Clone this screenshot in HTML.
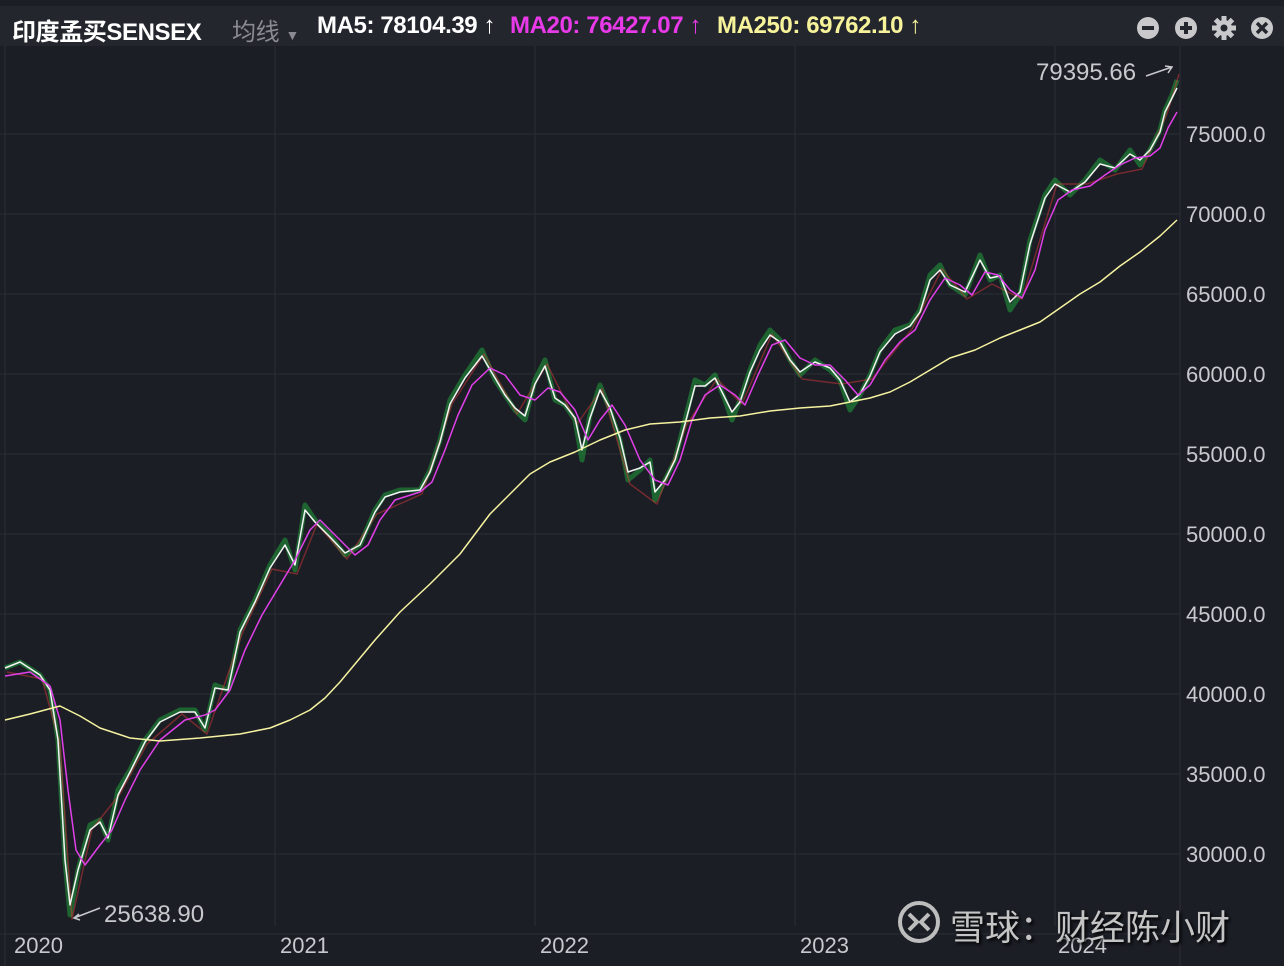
<!DOCTYPE html><html><head><meta charset="utf-8"><style>
body{margin:0;width:1284px;height:966px;background:#1c1e26;overflow:hidden;font-family:"Liberation Sans","Noto Sans CJK SC",sans-serif}
.hdr{position:absolute;left:0;top:6px;width:1284px;height:40px;background:#24262e}
.t{position:absolute;top:12px;font-size:24px;white-space:nowrap;letter-spacing:-0.4px;font-weight:600}
.ax{position:absolute;left:1186px;font-size:22px;color:#c8c9cd}
.yr{position:absolute;top:933px;font-size:22px;color:#c8c9cd}
</style></head><body>
<div class="hdr"></div>
<div class="t" style="left:12px;color:#fff">印度孟买SENSEX</div>
<div class="t" style="left:232px;color:#8a8b90;font-weight:400">均线 <span style="font-size:14px">▼</span></div>
<div class="t" style="left:317px;color:#fff">MA5: 78104.39 ↑</div>
<div class="t" style="left:510px;color:#e83ae8">MA20: 76427.07 ↑</div>
<div class="t" style="left:717px;color:#f6f39a">MA250: 69762.10 ↑</div>
<svg style="position:absolute;left:1135px;top:15px" width="145" height="26">
<circle cx="13" cy="13" r="11" fill="#c9c9cc"/><rect x="7" y="11" width="12" height="4" fill="#24262e"/>
<circle cx="51" cy="13" r="11" fill="#c9c9cc"/><rect x="45" y="11" width="12" height="4" fill="#24262e"/><rect x="49" y="7" width="4" height="12" fill="#24262e"/>
<g transform="translate(89,13)" fill="#c9c9cc"><circle r="8"/><rect x="-2.5" y="-12" width="5" height="24"/><rect x="-2.5" y="-12" width="5" height="24" transform="rotate(45)"/><rect x="-2.5" y="-12" width="5" height="24" transform="rotate(90)"/><rect x="-2.5" y="-12" width="5" height="24" transform="rotate(135)"/><circle r="3.5" fill="#24262e"/></g>
<circle cx="127" cy="13" r="11" fill="#c9c9cc"/><path d="M122 8l10 10M132 8l-10 10" stroke="#24262e" stroke-width="3.5"/>
</svg>
<svg style="position:absolute;left:0;top:46px" width="1284" height="920">
<g stroke="#2c2e37" stroke-width="1">
<path d="M0 88H1180M0 168H1180M0 248H1180M0 328H1180M0 408H1180M0 488H1180M0 568H1180M0 648H1180M0 728H1180M0 808H1180M0 888H1180"/>
<path d="M5 0V920M275 0V880M535 0V880M795 0V880M1055 0V880M1180 0V920"/>
</g>
<g transform="translate(0,-46)" fill="none" stroke-linejoin="round">
<polyline stroke="#1f9e3a" stroke-width="5" opacity="0.55" points="5,668 20,662 40,675 50,690 58,740 65,860 70,915 78,870 90,825 100,820 108,840 118,790 130,770 145,740 160,720 180,710 195,710 205,730 215,685 228,690 240,630 255,600 270,565 285,540 295,570 305,505 315,520 330,535 345,555 360,545 375,510 385,495 400,490 420,490 430,470 440,440 450,400 465,375 482,350 495,380 505,395 515,410 525,420 535,380 545,360 555,400 565,405 575,420 582,460 590,415 600,385 610,410 620,440 628,480 640,470 650,460 655,500 665,480 675,460 685,420 695,380 705,385 715,375 725,400 732,420 740,400 750,370 760,345 770,330 780,340 790,360 800,375 815,360 830,370 840,380 850,410 860,395 870,375 880,350 895,330 910,325 920,310 930,275 940,265 950,285 965,295 980,255 990,280 1000,275 1010,310 1020,295 1030,240 1045,195 1055,180 1070,195 1085,180 1100,160 1115,170 1130,150 1140,165 1150,150 1160,130 1165,110 1172,95 1177,80"/>
<polyline stroke="#e03a3a" stroke-width="1.5" opacity="0.45" transform="translate(2,4)" points="5,668 40,675 58,740 70,915 90,825 118,790 145,740 180,710 205,730 240,630 270,565 295,570 315,520 345,555 375,510 420,490 450,400 482,350 515,410 545,360 575,420 600,385 628,480 655,500 685,420 715,375 740,400 770,330 800,375 840,380 870,375 910,325 940,265 965,295 990,280 1020,295 1055,180 1085,180 1115,170 1140,165 1165,110 1177,70"/>
<polyline stroke="#f4f4f4" stroke-width="1.5" points="5,668 20,662 40,675 50,690 58,740 65,860 70,905 78,870 90,830 100,822 108,838 118,795 130,772 145,742 160,722 180,712 195,712 205,728 215,688 228,690 240,632 255,602 270,568 285,545 295,565 305,510 315,522 330,537 345,553 360,545 375,512 385,497 400,492 420,490 430,472 440,442 450,404 465,378 482,356 495,378 505,395 515,408 525,416 535,384 545,366 555,398 565,405 575,418 582,450 590,418 600,390 610,408 620,438 628,472 640,468 650,462 655,492 665,480 675,460 685,424 695,386 705,386 715,378 725,398 732,412 740,402 750,372 760,350 770,335 780,342 790,360 800,372 815,362 830,368 840,380 850,402 860,394 870,376 880,352 895,334 910,326 920,312 930,280 940,270 950,285 965,292 980,260 990,278 1000,276 1010,302 1020,292 1030,244 1045,198 1055,184 1070,192 1085,182 1100,164 1115,168 1130,154 1140,160 1150,150 1160,132 1165,112 1172,98 1177,88"/>
<polyline stroke="#e040e8" stroke-width="1.5" points="5,676 30,672 50,686 60,720 68,790 76,850 85,865 100,845 112,830 125,800 140,770 160,740 185,720 205,715 215,710 230,690 245,650 262,615 280,585 295,560 310,530 320,520 340,540 355,555 368,545 380,520 395,500 420,492 432,482 445,450 458,415 472,385 490,368 505,375 520,395 535,400 548,388 560,392 575,410 588,440 600,420 612,405 625,425 640,460 655,480 668,485 680,460 692,420 705,395 720,385 735,395 745,405 758,375 772,345 785,340 800,358 815,365 830,365 845,380 858,395 870,385 885,360 900,342 915,330 930,300 945,278 960,285 972,295 985,272 998,275 1010,290 1022,298 1035,270 1045,230 1058,200 1072,190 1090,186 1105,175 1120,165 1135,158 1150,156 1160,148 1168,128 1177,112"/>
<polyline stroke="#f6f3a0" stroke-width="1.5" points="5,720 30,714 60,706 80,716 100,728 130,738 160,741 200,738 240,734 270,728 290,720 310,710 325,698 340,682 355,664 375,640 400,612 430,584 460,554 490,514 510,494 530,474 550,462 575,452 600,440 625,430 650,424 680,422 710,418 740,416 770,411 800,408 830,406 850,402 870,398 890,392 910,382 930,370 950,358 975,350 1000,338 1020,330 1040,322 1060,308 1080,294 1100,282 1120,266 1140,252 1160,236 1177,220"/>
</g>
<g transform="translate(0,-46)" stroke="#c8c9cd" stroke-width="1.5" fill="none">
<path d="M1146 76L1172 67M1165 66l7 1-4 6"/>
<path d="M100 908L74 918M79 914l-5 4 6 2"/>
</g>
</svg>
<div class="ax" style="top:122px">75000.0</div>
<div class="ax" style="top:202px">70000.0</div>
<div class="ax" style="top:282px">65000.0</div>
<div class="ax" style="top:362px">60000.0</div>
<div class="ax" style="top:442px">55000.0</div>
<div class="ax" style="top:522px">50000.0</div>
<div class="ax" style="top:602px">45000.0</div>
<div class="ax" style="top:682px">40000.0</div>
<div class="ax" style="top:762px">35000.0</div>
<div class="ax" style="top:842px">30000.0</div>
<div style="position:absolute;left:1036px;top:59px;font-size:24px;color:#c8c9cd">79395.66</div>
<div style="position:absolute;left:104px;top:901px;font-size:24px;color:#c8c9cd">25638.90</div>
<div class="yr" style="left:14px">2020</div>
<div class="yr" style="left:280px">2021</div>
<div class="yr" style="left:540px">2022</div>
<div class="yr" style="left:800px">2023</div>
<div class="yr" style="left:1058px">2024</div>
<svg style="position:absolute;left:897px;top:900px" width="48" height="48"><circle cx="22" cy="22" r="19" fill="none" stroke="#bdbdbd" stroke-width="4"/><path d="M12 14l8 8-8 8M32 14l-8 8 8 8" stroke="#bdbdbd" stroke-width="4" fill="none"/></svg>
<div style="position:absolute;left:950px;top:900px;font-size:35px;color:#c4c4c4;white-space:nowrap;text-shadow:2px 2px 3px #000">雪球：财经陈小财</div>
</body></html>
